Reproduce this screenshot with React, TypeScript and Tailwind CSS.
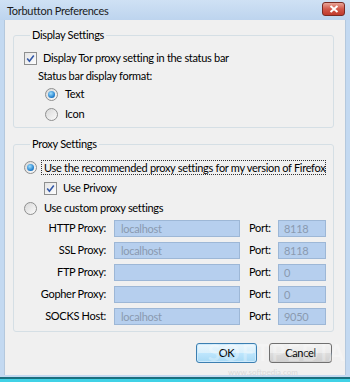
import React from "react";

const font = { fontFamily: "Lato, 'Open Sans', sans-serif" };

const Radio: React.FC<{ checked?: boolean }> = ({ checked }) => (
  <span className="w-[13px] h-[13px] rounded-full border border-[#8e8f8f] bg-[linear-gradient(135deg,#d8d8d8,#fbfbfb)] flex items-center justify-center shrink-0">
    {checked && (
      <span className="w-[7px] h-[7px] rounded-full bg-[radial-gradient(circle_at_40%_35%,#9fe0ff,#1a78c8_70%,#0c4f96)]" />
    )}
  </span>
);

const Check: React.FC = () => (
  <span className="w-[13px] h-[13px] border border-[#8e8f8f] bg-[linear-gradient(135deg,#e4e4e4,#fdfdfd)] flex items-center justify-center shrink-0">
    <svg width="9" height="9" viewBox="0 0 9 9">
      <path d="M1.2 4.6 L3.4 7.2 L7.8 1.4" fill="none" stroke="#3358a8" strokeWidth="1.6" />
    </svg>
  </span>
);

const ProxyRow: React.FC<{ label: string; host: string; port: string }> = ({ label, host, port }) => (
  <div className="flex items-center h-[17px]">
    <span className="w-[82px] text-right">{label}</span>
    <div className="ml-[8px] w-[126px] h-[17px] bg-[#b6cfee] border border-[#9db7d6] text-[#8a9ab0] pl-[6px] leading-[15px]">{host}</div>
    <span className="ml-[9px] w-[29px]">Port:</span>
    <div className="w-[48px] h-[17px] bg-[#b6cfee] border border-[#9db7d6] text-[#8a9ab0] pl-[5px] leading-[15px]">{port}</div>
  </div>
);

export default function App() {
  return (
    <div className="w-[350px] h-[382px] bg-[#c3d9f1] flex flex-col text-[11px] tracking-[-0.3px] text-black relative overflow-hidden" style={font}>
      <div className="h-[20px] flex items-center justify-between pl-[7px] pr-[5px] bg-[linear-gradient(#cfe1f4,#bdd4ee)]">
        <span className="text-[#1b1b1b] leading-none">Torbutton Preferences</span>
        <div className="w-[23px] h-[14px] mt-[-2px] rounded-[3px] border border-[#7a2a22] bg-[linear-gradient(#e9a598,#d2584a_50%,#c03a2c)] flex items-center justify-center">
          <svg width="10" height="8" viewBox="0 0 10 8">
            <path d="M1.5 1 L8.5 7 M8.5 1 L1.5 7" stroke="#fff" strokeWidth="2" />
          </svg>
        </div>
      </div>

      <div className="mx-[4px] h-[355px] bg-[#f0f0f0] border-l border-r border-[#b4c8dd] flex flex-col">
        <fieldset className="ml-[8px] mt-[8px] w-[321px] border border-[#d5dfe5] rounded-[3px] pl-[10px] pb-[5px]">
          <legend className="ml-[6px] px-[2px] leading-[14px]">Display Settings</legend>
          <div className="flex flex-col pt-[8px]">
            <div className="flex items-center gap-[6px] h-[16px]">
              <Check />
              <span>Display Tor proxy setting in the status bar</span>
            </div>
            <div className="h-[16px] mt-[2px] ml-[14px] flex items-center">Status bar display format:</div>
            <div className="flex items-center gap-[7px] h-[16px] mt-[2px] ml-[21px]">
              <Radio checked />
              <span>Text</span>
            </div>
            <div className="flex items-center gap-[7px] h-[16px] mt-[4px] ml-[21px]">
              <Radio />
              <span>Icon</span>
            </div>
          </div>
        </fieldset>

        <fieldset className="ml-[8px] mt-[9px] w-[321px] border border-[#d5dfe5] rounded-[3px] pl-[10px] pb-[6px]">
          <legend className="ml-[6px] px-[2px] leading-[14px]">Proxy Settings</legend>
          <div className="flex flex-col pt-[8px]">
            <div className="flex items-center gap-[4px] h-[16px]">
              <Radio checked />
              <span className="border border-dotted border-[#333] px-[2px] leading-[13px] w-[285px] whitespace-nowrap">Use the recommended proxy settings for my version of Firefox</span>
            </div>
            <div className="flex items-center gap-[6px] h-[16px] mt-[5px] ml-[20px]">
              <Check />
              <span>Use Privoxy</span>
            </div>
            <div className="flex items-center gap-[7px] h-[16px] mt-[4px]">
              <Radio />
              <span>Use custom proxy settings</span>
            </div>
            <div className="flex flex-col gap-[5px] mt-[4px]">
              <ProxyRow label="HTTP Proxy:" host="localhost" port="8118" />
              <ProxyRow label="SSL Proxy:" host="localhost" port="8118" />
              <ProxyRow label="FTP Proxy:" host="" port="0" />
              <ProxyRow label="Gopher Proxy:" host="" port="0" />
              <ProxyRow label="SOCKS Host:" host="localhost" port="9050" />
            </div>
          </div>
        </fieldset>

        <div className="flex justify-end gap-[12px] pr-[13px] mt-[11px]">
          <button className="w-[61px] h-[20px] rounded-[3px] border border-[#3c7fb1] bg-[linear-gradient(#eaf6fd,#d9f0fc_50%,#bee6fd_51%,#a7d9f5)] shadow-[inset_0_0_0_1px_#cdeafc]">OK</button>
          <button className="w-[63px] h-[20px] rounded-[3px] border border-[#707070] bg-[linear-gradient(#f2f2f2,#ebebeb_50%,#dddddd_51%,#cfcfcf)]">Cancel</button>
        </div>
      </div>

      <div className="h-[2px] bg-[#c3d9f1]" />
      <div className="h-[2px] bg-[#1c6f7e]" />
      <div className="flex-1 bg-[#40d2e6]" />

      <div className="absolute left-[208px] top-[336px] text-[22px] font-bold tracking-[2px] text-white/30 pointer-events-none">SOFTPEDIA</div>
      <div className="absolute left-[228px] top-[366px] text-[8px] tracking-normal text-[#c8c8c8]/60 pointer-events-none">www.softpedia.com</div>
    </div>
  );
}
